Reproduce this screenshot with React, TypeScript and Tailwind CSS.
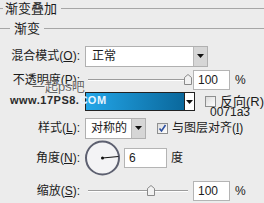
import React from "react";

const font = { fontFamily: '"Liberation Sans", "Noto Sans CJK SC", sans-serif' };

function Label({ children, w = "w-[80px]" }: { children: React.ReactNode; w?: string }) {
  return <div className={`${w} shrink-0 text-right leading-none`}>{children}</div>;
}

function Arrow() {
  return (
    <svg width="7" height="4" viewBox="0 0 7 4">
      <path d="M0 0h7L3.5 4z" fill="#111" />
    </svg>
  );
}

function Slider({ pos }: { pos: number }) {
  return (
    <div className="relative w-[100px] h-[20px] ml-[3px]">
      <div className="absolute left-0 right-0 top-[9px] h-[1px] bg-[#9c9c9c]" />
      <div className="absolute left-0 right-0 top-[10px] h-[1px] bg-white" />
      <svg className="absolute top-[4px]" style={{ left: pos }} width="8" height="11" viewBox="0 0 8 11">
        <path d="M0.5 10.5V3.5L4 0.5L7.5 3.5V10.5Z" fill="#f2f2f2" stroke="#8a8a8a" />
      </svg>
    </div>
  );
}

function NumBox({ value, w = "w-[37px]" }: { value: string; w?: string }) {
  return (
    <div className={`${w} h-[20px] bg-white border border-[#b4b4b4] flex items-center pl-[4px] text-[12px]`}>
      {value}
    </div>
  );
}

function Check({ checked }: { checked?: boolean }) {
  return (
    <div className="w-[11px] h-[11px] border border-[#8e8f8f] bg-gradient-to-br from-[#dcdcdc] to-white flex items-center justify-center">
      {checked && (
        <svg width="9" height="9" viewBox="0 0 9 9">
          <path d="M1.5 4.5L3.5 7L7.5 1" stroke="#2c4fa0" strokeWidth="1.6" fill="none" />
        </svg>
      )}
    </div>
  );
}

export default function App() {
  return (
    <div
      className="relative w-[264px] h-[203px] overflow-hidden bg-[#ececec] text-[#1b1b1b] text-[12px]"
      style={font}
    >
      {/* 标题 */}
      <div className="flex items-center h-[16px] pt-[1px]">
        <div className="w-[3px] h-[1px] bg-[#a6a6a6]" />
        <span className="ml-[2px] text-[13px] leading-none">渐变叠加</span>
        <div className="flex-1 ml-[4px] h-[1px] bg-[#a6a6a6]" />
      </div>
      <div className="flex items-center h-[16px] mt-[4px]">
        <div className="w-[10px] h-[1px] bg-[#a6a6a6]" />
        <span className="ml-[4px] text-[13px] leading-none">渐变</span>
        <div className="flex-1 ml-[4px] h-[1px] bg-[#a6a6a6]" />
      </div>

      {/* 混合模式 */}
      <div className="flex items-center mt-[10px] h-[20px]">
        <Label>
          混合模式(<u>O</u>):
        </Label>
        <div className="ml-[5px] flex h-[21px] w-[123px] border border-[#b0b0b0] bg-white">
          <div className="flex-1 flex items-center pl-[6px] text-[12px]">正常</div>
          <div className="w-[14px] bg-[#d6d6d6] border-l border-[#b8b8b8] flex items-center justify-center">
            <Arrow />
          </div>
        </div>
      </div>

      {/* 不透明度 */}
      <div className="flex items-center mt-[4px] h-[20px]">
        <Label>
          不透明度(<u>P</u>):
        </Label>
        <div className="ml-[5px]">
          <Slider pos={96} />
        </div>
        <div className="ml-[5px]">
          <NumBox value="100" />
        </div>
        <span className="ml-[5px]">%</span>
      </div>

      {/* 渐变 */}
      <div className="flex items-center mt-[2px] h-[19px]">
        <div className="w-[85px] shrink-0" />
        <div className="flex h-[19px] w-[123px] border border-[#222]">
          <div className="flex-1 bg-gradient-to-r from-[#23a6e8] to-[#0a689c]" />
          <div className="w-[10px] bg-white border-l border-[#222] flex items-center justify-center">
            <Arrow />
          </div>
        </div>
        <div className="ml-[10px]">
          <Check />
        </div>
        <span className="ml-[4px] whitespace-nowrap leading-none text-[13px]">反向(R)</span>
      </div>

      {/* 样式 */}
      <div className="flex items-center mt-[7px] h-[20px]">
        <Label>
          样式(<u>L</u>):
        </Label>
        <div className="ml-[5px] flex h-[21px] w-[61px] border border-[#b0b0b0] bg-white">
          <div className="flex-1 flex items-center pl-[5px]">对称的</div>
          <div className="w-[14px] bg-[#d6d6d6] border-l border-[#b8b8b8] flex items-center justify-center">
            <Arrow />
          </div>
        </div>
        <div className="ml-[11px]">
          <Check checked />
        </div>
        <span className="ml-[4px] whitespace-nowrap">
          与图层对齐(<u>I</u>)
        </span>
      </div>

      {/* 角度 */}
      <div className="flex items-center mt-[2px] h-[36px]">
        <Label>
          角度(<u>N</u>):
        </Label>
        <svg className="ml-[4px]" width="37" height="36" viewBox="0 0 37 36">
          <circle cx="18.5" cy="18" r="16.5" fill="#f3f3f5" stroke="#5d6070" strokeWidth="2" />
          <path d="M18.5 18L34.5 16.5" stroke="#111" strokeWidth="1" />
          <circle cx="18.5" cy="18" r="1.5" fill="#111" />
        </svg>
        <div className="ml-[3px]">
          <NumBox value="6" w="w-[43px]" />
        </div>
        <span className="ml-[4px]">度</span>
      </div>

      {/* 缩放 */}
      <div className="flex items-center mt-[5px] h-[20px]">
        <Label>
          缩放(<u>S</u>):
        </Label>
        <div className="ml-[5px]">
          <Slider pos={59} />
        </div>
        <div className="ml-[5px]">
          <NumBox value="100" />
        </div>
        <span className="ml-[5px]">%</span>
      </div>

      {/* 叠加文字 */}
      <div className="absolute left-[210px] top-[106px] text-[12px] leading-none text-[#222]">0071a3</div>
      <div className="absolute left-[32px] top-[80px] text-[13px] leading-none text-[#666] [text-shadow:0_0_1px_#fff,0_0_1px_#fff]">
        一起ps吧
      </div>
      <div className="absolute left-[10px] top-[95px] text-[11px] font-bold leading-none tracking-[0.5px] text-[#2a2a2a]">
        www.17PS8.<span className="text-[#e8f4ff]">COM</span>
      </div>
    </div>
  );
}
